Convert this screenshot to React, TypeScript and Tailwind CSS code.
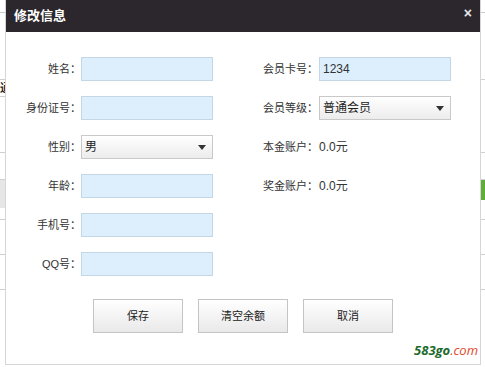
import React from "react";

const font = { fontFamily: '"Liberation Sans", "Noto Sans CJK SC", sans-serif' };

function Strip({ side }: { side: "left" | "right" }) {
  return (
    <div className="flex w-full flex-col bg-white">
      <div className="h-[13px] border-b border-[#c9c9c9]" />
      <div className="h-[67px] border-b border-[#d0d0d0]" />
      {side === "left" ? (
        <div className="h-[17px] border-b border-[#d0d0d0] text-[11px] font-bold leading-[17px] text-[#222]">通</div>
      ) : (
        <div className="h-[17px]" />
      )}
      <div className="h-[56px] border-b border-[#d0d0d0]" />
      <div className="h-[27px] border-b border-[#d0d0d0]" />
      {side === "left" ? (
        <div className="h-[28px] bg-[#e6e6e6]" />
      ) : (
        <div className="h-[20px] bg-[#5fae3b]" />
      )}
      <div className={side === "left" ? "h-[12px] border-b border-[#d0d0d0]" : "h-[20px] border-b border-[#d0d0d0]"} />
      <div className="h-[35px] border-b border-[#d0d0d0]" />
      <div className="h-[35px] border-b border-[#d0d0d0]" />
    </div>
  );
}

function TextInput({ value }: { value?: string }) {
  return (
    <div className="flex h-[24px] w-[132px] shrink-0 items-center border border-[#c3d7e6] bg-[#ddeffd] px-[3px] text-[12px] text-[#333]">
      {value}
    </div>
  );
}

function Select({ value }: { value: string }) {
  return (
    <div className="flex h-[24px] w-[132px] shrink-0 items-center justify-between border border-[#c9c9c9] bg-gradient-to-b from-white to-[#ececec] pl-[3px] pr-[6px] text-[12px] text-[#222]">
      <span>{value}</span>
      <svg width="8" height="5" viewBox="0 0 8 5">
        <path d="M0 0 L8 0 L4 5 Z" fill="#333" />
      </svg>
    </div>
  );
}

function Label({ text }: { text: string }) {
  return <div className="w-[75px] shrink-0 whitespace-nowrap text-right text-[11px] text-[#333]">{text}</div>;
}

function RLabel({ text }: { text: string }) {
  return <div className="w-[56px] shrink-0 whitespace-nowrap text-[11px] text-[#333]">{text}</div>;
}

function Row({ children }: { children: React.ReactNode }) {
  return <div className="flex h-[24px] items-center">{children}</div>;
}

function Btn({ text }: { text: string }) {
  return (
    <div className="flex h-[34px] w-[90px] items-center justify-center border border-[#c4c4c4] bg-gradient-to-b from-white to-[#e9e9e9] text-[11px] text-[#222]">
      {text}
    </div>
  );
}

export default function App() {
  return (
    <div className="flex h-[367px] w-[485px] overflow-hidden bg-white" style={font}>
      <div className="w-[5px] shrink-0">
        <Strip side="left" />
      </div>
      <div className="flex h-[365px] w-[476px] shrink-0 flex-col border-x border-b border-[#d6d6d6] bg-white">
        <div className="flex h-[32px] items-center justify-between bg-[#2b272c] pl-[8px] pr-[8px] text-white">
          <span className="text-[13px] font-bold">修改信息</span>
          <span className="mb-[6px] text-[14px] font-bold leading-none text-[#e8e8e8]">×</span>
        </div>
        <div className="flex pt-[25px]">
          <div className="flex flex-col gap-[15px]">
            <Row>
              <Label text="姓名：" />
              <TextInput />
            </Row>
            <Row>
              <Label text="身份证号：" />
              <TextInput />
            </Row>
            <Row>
              <Label text="性别：" />
              <Select value="男" />
            </Row>
            <Row>
              <Label text="年龄：" />
              <TextInput />
            </Row>
            <Row>
              <Label text="手机号：" />
              <TextInput />
            </Row>
            <Row>
              <Label text="QQ号：" />
              <TextInput />
            </Row>
          </div>
          <div className="ml-[50px] flex flex-col gap-[15px]">
            <Row>
              <RLabel text="会员卡号：" />
              <TextInput value="1234" />
            </Row>
            <Row>
              <RLabel text="会员等级：" />
              <Select value="普通会员" />
            </Row>
            <Row>
              <RLabel text="本金账户：" />
              <div className="text-[12px] text-[#333]">0.0元</div>
            </Row>
            <Row>
              <RLabel text="奖金账户：" />
              <div className="text-[12px] text-[#333]">0.0元</div>
            </Row>
          </div>
        </div>
        <div className="mt-[23px] flex justify-center gap-[15px]">
          <Btn text="保存" />
          <Btn text="清空余额" />
          <Btn text="取消" />
        </div>
        <div className="mt-[9px] flex justify-end pr-[2px] text-[13px] font-bold italic leading-[16px]" style={{ fontFamily: '"Open Sans", "DejaVu Sans", sans-serif' }}>
          <span className="text-[#1d6a2c]">583go</span>
          <span className="font-normal text-[#e0482c]">.com</span>
        </div>
      </div>
      <div className="w-[4px] shrink-0">
        <Strip side="right" />
      </div>
    </div>
  );
}
